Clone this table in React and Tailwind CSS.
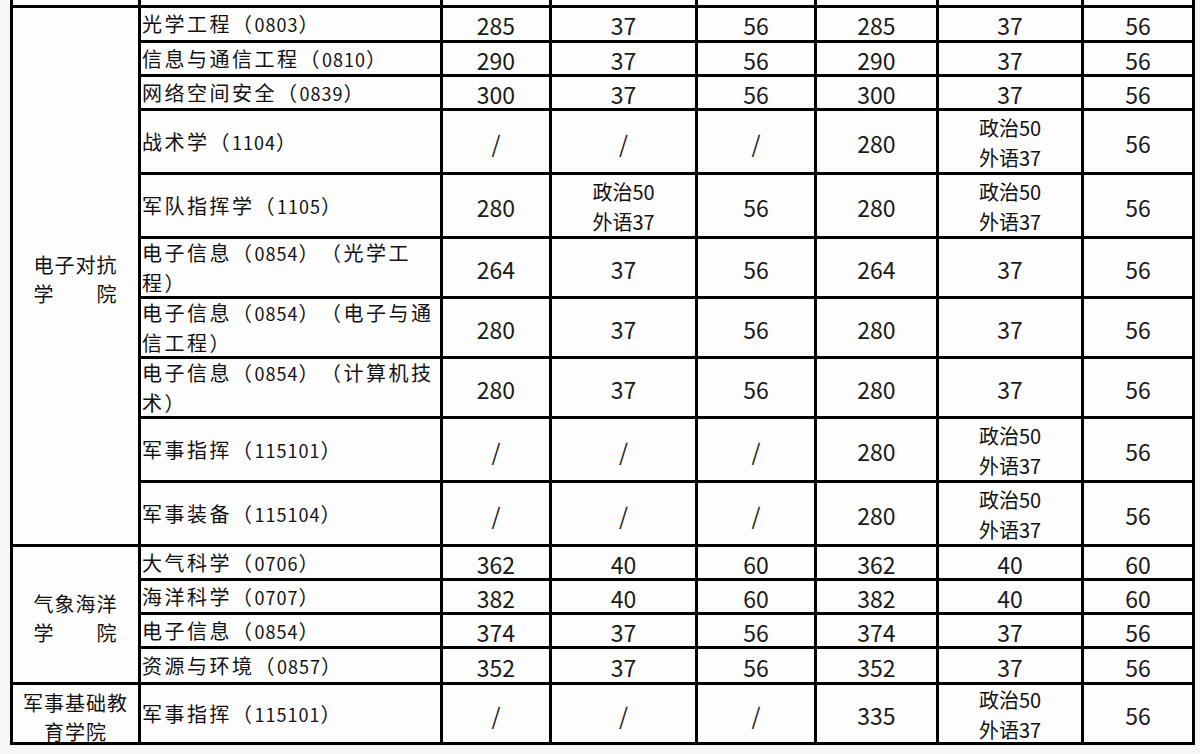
const P = "POL";

const rows = [
  { name: ["光学工程（0803）"], v: ["285", "37", "56", "285", "37", "56"] },
  { name: ["信息与通信工程（0810）"], v: ["290", "37", "56", "290", "37", "56"] },
  { name: ["网络空间安全（0839）"], v: ["300", "37", "56", "300", "37", "56"] },
  { name: ["战术学（1104）"], v: ["/", "/", "/", "280", P, "56"] },
  { name: ["军队指挥学（1105）"], v: ["280", P, "56", "280", P, "56"] },
  { name: ["电子信息（0854）（光学工", "程）"], v: ["264", "37", "56", "264", "37", "56"] },
  { name: ["电子信息（0854）（电子与通", "信工程）"], v: ["280", "37", "56", "280", "37", "56"] },
  { name: ["电子信息（0854）（计算机技", "术）"], v: ["280", "37", "56", "280", "37", "56"] },
  { name: ["军事指挥（115101）"], v: ["/", "/", "/", "280", P, "56"] },
  { name: ["军事装备（115104）"], v: ["/", "/", "/", "280", P, "56"] },
  { name: ["大气科学（0706）"], v: ["362", "40", "60", "362", "40", "60"] },
  { name: ["海洋科学（0707）"], v: ["382", "40", "60", "382", "40", "60"] },
  { name: ["电子信息（0854）"], v: ["374", "37", "56", "374", "37", "56"] },
  { name: ["资源与环境（0857）"], v: ["352", "37", "56", "352", "37", "56"] },
  { name: ["军事指挥（115101）"], v: ["/", "/", "/", "335", P, "56"] },
];

const colleges = {
  0: { span: "row-span-10", lines: ["电子对抗", "学　　院"] },
  10: { span: "row-span-4", lines: ["气象海洋", "学　　院"] },
  14: { span: "row-span-1", lines: ["军事基础教", "育学院"] },
};

function NameLine({ text }) {
  const parts = text.split(/(\d+)/);
  return (
    <div>
      {parts.map((p, i) =>
        /\d/.test(p) ? (
          <span key={i} className="text-[18px] tracking-[1px]">
            {p}
          </span>
        ) : (
          <span key={i}>{p}</span>
        )
      )}
    </div>
  );
}

function Value({ v }) {
  if (v === P) {
    return (
      <div className="text-[20px] leading-[30px] text-center">
        政治50
        <br />
        外语37
      </div>
    );
  }
  return <span className="text-[23px] text-[#1a1a1a]">{v}</span>;
}

export default function App() {
  return (
    <div className="min-h-screen w-full bg-[#f6f6f6] font-['Noto_Sans_CJK_SC',sans-serif] text-[#111] [text-spacing-trim:space-all]">
      <div className="ml-[10px] w-[1185px] bg-black px-[3px] pb-[3px] grid gap-[3px] grid-cols-[125px_299px_106px_143px_116px_119px_142px_108px] grid-rows-[5px_32px_31px_31px_61px_61px_57px_57px_57px_61px_61px_31px_31px_31px_33px_57px]">
        {/* partially visible row from above */}
        {Array.from({ length: 8 }).map((_, i) => (
          <div key={"top" + i} className="bg-[#fdfdfd]" />
        ))}

        {rows.map((r, ri) => {
          const c = colleges[ri];
          return [
            c && (
              <div
                key={"c" + ri}
                className={`${c.span} col-start-1 bg-[#fdfdfd] flex flex-col items-center justify-center text-[20px] leading-[29px] tracking-[1px] pt-[6px]`}
              >
                {c.lines.map((l) => (
                  <div key={l}>{l}</div>
                ))}
              </div>
            ),
            <div
              key={"n" + ri}
              className="col-start-2 bg-[#fdfdfd] flex flex-col justify-center pl-[1px] text-[20px] leading-[29px] tracking-[2.5px] whitespace-nowrap overflow-hidden"
            >
              {r.name.map((t, i) => (
                <NameLine key={i} text={t} />
              ))}
            </div>,
            ...r.v.map((v, vi) => (
              <div
                key={"v" + ri + "-" + vi}
                className="bg-[#fdfdfd] flex items-center justify-center pt-[3px]"
              >
                <Value v={v} />
              </div>
            )),
          ];
        })}
      </div>
    </div>
  );
}
